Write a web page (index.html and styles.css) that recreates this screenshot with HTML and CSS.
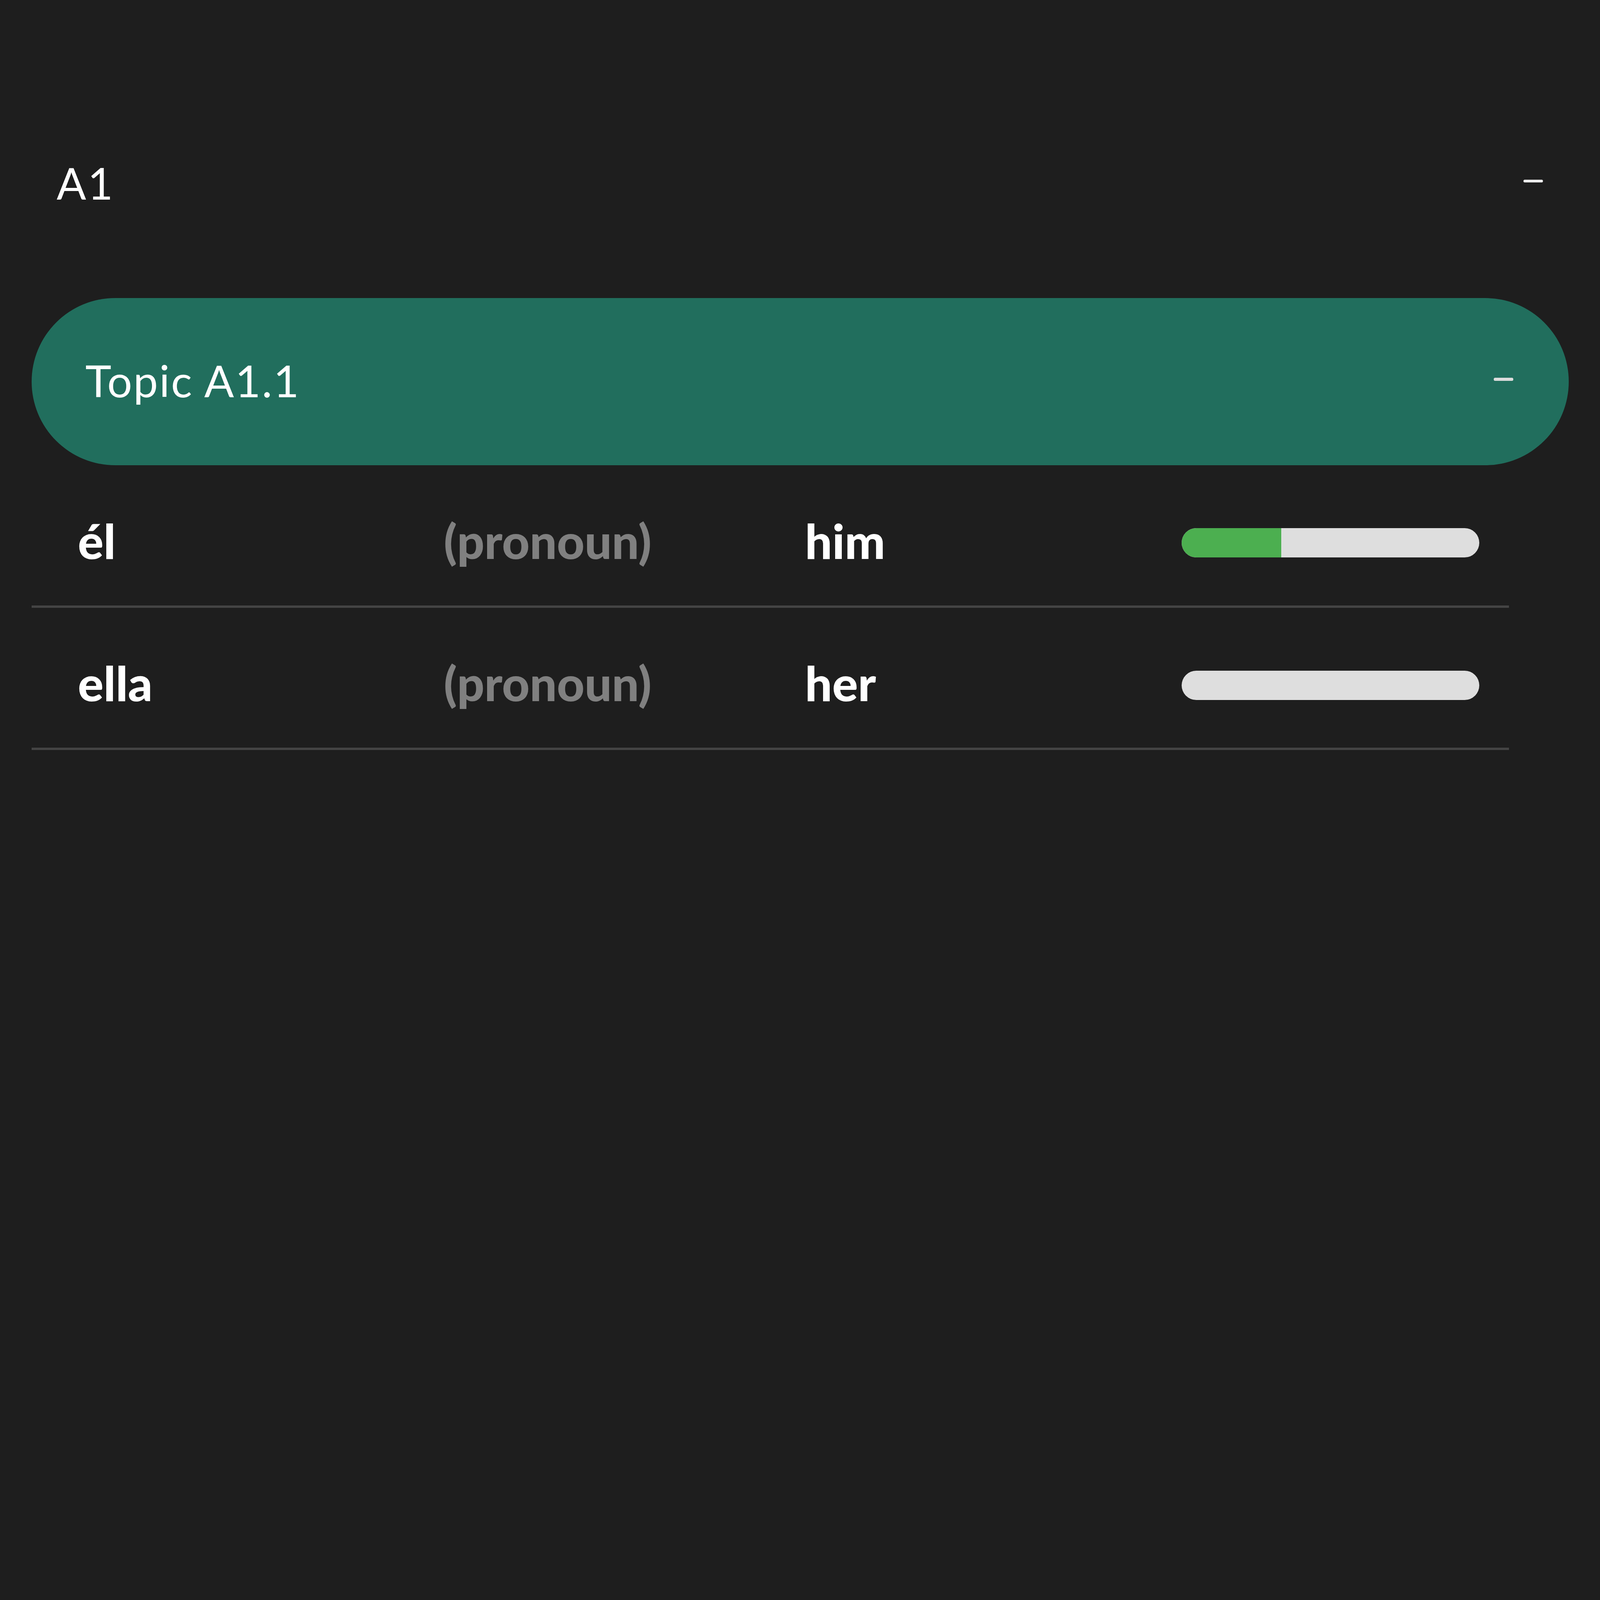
FILE: index.html
```html
<!DOCTYPE html>
<html lang="en">
<head>
<meta charset="utf-8">
<title>Vocabulary</title>
<link rel="stylesheet" href="styles.css">
</head>
<body>
<main class="page">
  <header class="level">
    <span class="level-title">A1</span>
    <span class="minus"></span>
  </header>
  <section class="topic">
    <span class="topic-title">Topic A1.1</span>
    <span class="minus minus-topic"></span>
  </section>
  <div class="rows">
    <div class="row">
      <span class="word">él</span>
      <span class="pos">(pronoun)</span>
      <span class="word">him</span>
      <div class="progress"><div class="progress-fill" style="width: 33.4%"></div></div>
    </div>
    <div class="row">
      <span class="word">ella</span>
      <span class="pos">(pronoun)</span>
      <span class="word">her</span>
      <div class="progress"><div class="progress-fill" style="width: 0%"></div></div>
    </div>
  </div>
</main>
</body>
</html>
```
FILE: styles.css
```css
html {
  font-size: 1.25vw;
  background: #1e1e1e;
}
html, body {
  margin: 0;
  padding: 0;
}
body {
  min-height: 100vh;
  background: #1e1e1e;
  font-family: "Lato", "Liberation Sans", sans-serif;
  color: #ffffff;
}
.page {
  padding: 6rem 1.56rem 0 1.59rem;
}
.level {
  height: 6.3rem;
  display: flex;
  align-items: center;
  justify-content: space-between;
  padding: 0 1.29rem 0 1.24rem;
}
.level-title {
  font-size: 2.18rem;
  font-weight: 400;
  line-height: 1;
  letter-spacing: 0.08rem;
}
.minus {
  display: block;
  width: 0.98rem;
  height: 0.14rem;
  border-radius: 0.07rem;
  background: #ececec;
  margin-top: -0.18rem;
}
.topic {
  margin-top: 2.6rem;
  height: 8.37rem;
  border-radius: 4.19rem;
  background: #216e5d;
  display: flex;
  align-items: center;
  justify-content: space-between;
  padding: 0 2.77rem 0 2.68rem;
}
.topic-title {
  font-size: 2.2rem;
  font-weight: 400;
  line-height: 1;
  letter-spacing: 0.06rem;
  margin-bottom: 0.1rem;
}
.minus-topic {
  margin-top: -0.24rem;
  background: #dcdcdc;
}
.rows {
  width: 73.86rem;
}
.row {
  height: 6.25rem;
  padding-top: 0.75rem;
  padding-left: 2.3rem;
  display: grid;
  grid-template-columns: 18.3rem 18.06rem 18.83rem 14.89rem;
  align-items: center;
  border-bottom: 0.12rem solid #444444;
}
.word,
.pos {
  font-size: 2.4rem;
  font-weight: 900;
  line-height: 1;
  margin-bottom: 0.22rem;
}
.pos {
  color: #808080;
}
.progress {
  height: 1.47rem;
  border-radius: 0.74rem;
  background: #dedede;
  overflow: hidden;
}
.progress-fill {
  height: 100%;
  background: #4caf50;
}
```
